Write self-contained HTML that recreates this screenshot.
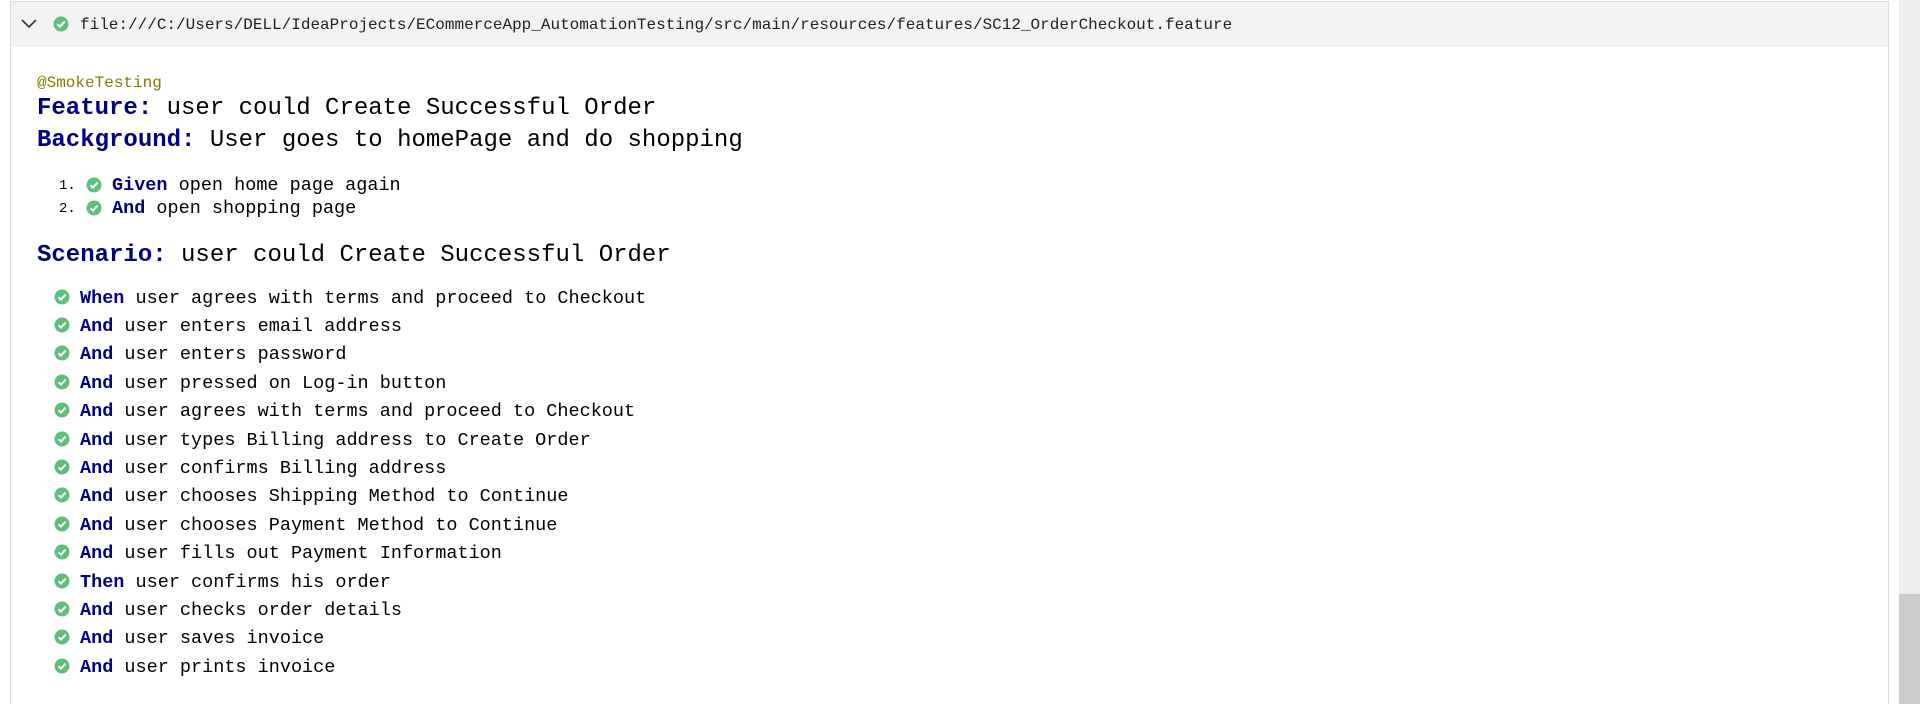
<!DOCTYPE html>
<html style="height:704px;overflow:hidden"><head><meta charset="utf-8"><style>
body{margin:0;width:1920px;height:704px;background:#fff;overflow:hidden;position:relative;font-family:"Liberation Mono",monospace;}
.panel{position:absolute;left:10px;top:1px;width:1879px;height:703px;border:1px solid #dcdcdc;border-bottom:none;background:#fff;box-sizing:border-box;}
.hdr{position:absolute;left:11px;top:2px;width:1877px;height:45px;background:#f2f2f2;}
.sb{position:absolute;left:1899px;top:0;width:21px;height:704px;background:#eeeeee;}
.thumb{position:absolute;left:1899px;top:594px;width:21px;height:110px;background:#cbcbcb;}
.l{position:absolute;white-space:pre;line-height:30px;height:30px;color:#000;}
.k{color:#000080;font-weight:bold;}
.ck{position:absolute;width:16px;height:16px;}
</style></head><body>
<div class="panel"></div>
<div class="hdr"></div>
<div class="sb"></div><div class="thumb"></div>
<svg style="position:absolute;left:21px;top:18px" width="16" height="12" viewBox="0 0 16 12"><path d="M1 2 L8 9 L15 2" fill="none" stroke="#333" stroke-width="1.6"/></svg>
<svg class="ck" style="left:53px;top:16px" viewBox="0 0 16 16"><circle cx="8" cy="8" r="7.5" fill="#5fbf7a"/><path d="M4.5 8.3 L7 10.6 L11.6 5.6" fill="none" stroke="#fff" stroke-width="2"/></svg>
<div class="l" style="left:80px;top:10px;font-size:16px;color:#222;">file:///C:/Users/DELL/IdeaProjects/ECommerceApp_AutomationTesting/src/main/resources/features/SC12_OrderCheckout.feature</div>
<div class="l" style="left:37px;top:68px;font-size:16px;color:#808000;">@SmokeTesting</div>
<div class="l" style="left:37px;top:94px;font-size:24px;"><span class="k">Feature:</span> user could Create Successful Order</div>
<div class="l" style="left:37px;top:126px;font-size:24px;"><span class="k">Background:</span> User goes to homePage and do shopping</div>
<div class="l" style="left:59px;top:171px;font-size:14px;">1.</div>
<div class="l" style="left:59px;top:194px;font-size:14px;">2.</div>
<svg class="ck" style="left:86px;top:177px" viewBox="0 0 16 16"><circle cx="8" cy="8" r="7.5" fill="#5fbf7a"/><path d="M4.5 8.3 L7 10.6 L11.6 5.6" fill="none" stroke="#fff" stroke-width="2"/></svg>
<svg class="ck" style="left:86px;top:200px" viewBox="0 0 16 16"><circle cx="8" cy="8" r="7.5" fill="#5fbf7a"/><path d="M4.5 8.3 L7 10.6 L11.6 5.6" fill="none" stroke="#fff" stroke-width="2"/></svg>
<div class="l" style="left:112px;top:171px;font-size:18.5px;"><span class="k">Given</span> open home page again</div>
<div class="l" style="left:112px;top:194px;font-size:18.5px;"><span class="k">And</span> open shopping page</div>
<div class="l" style="left:37px;top:241px;font-size:24px;"><span class="k">Scenario:</span> user could Create Successful Order</div>
<div id="steps"></div>
<script>
var s=[["When","user agrees with terms and proceed to Checkout"],["And","user enters email address"],["And","user enters password"],["And","user pressed on Log-in button"],["And","user agrees with terms and proceed to Checkout"],["And","user types Billing address to Create Order"],["And","user confirms Billing address"],["And","user chooses Shipping Method to Continue"],["And","user chooses Payment Method to Continue"],["And","user fills out Payment Information"],["Then","user confirms his order"],["And","user checks order details"],["And","user saves invoice"],["And","user prints invoice"]];
var h="";
for(var i=0;i<s.length;i++){var y=298.5+i*28.4;
h+='<svg class="ck" style="left:54px;top:'+(y-10)+'px" viewBox="0 0 16 16"><circle cx="8" cy="8" r="7.5" fill="#5fbf7a"/><path d="M4.5 8.3 L7 10.6 L11.6 5.6" fill="none" stroke="#fff" stroke-width="2"/></svg>';
h+='<div class="l" style="left:80px;top:'+(y-15)+'px;font-size:18.5px;"><span class="k">'+s[i][0]+'</span> '+s[i][1]+'</div>';}
document.getElementById("steps").innerHTML=h;
</script>
</body></html>
